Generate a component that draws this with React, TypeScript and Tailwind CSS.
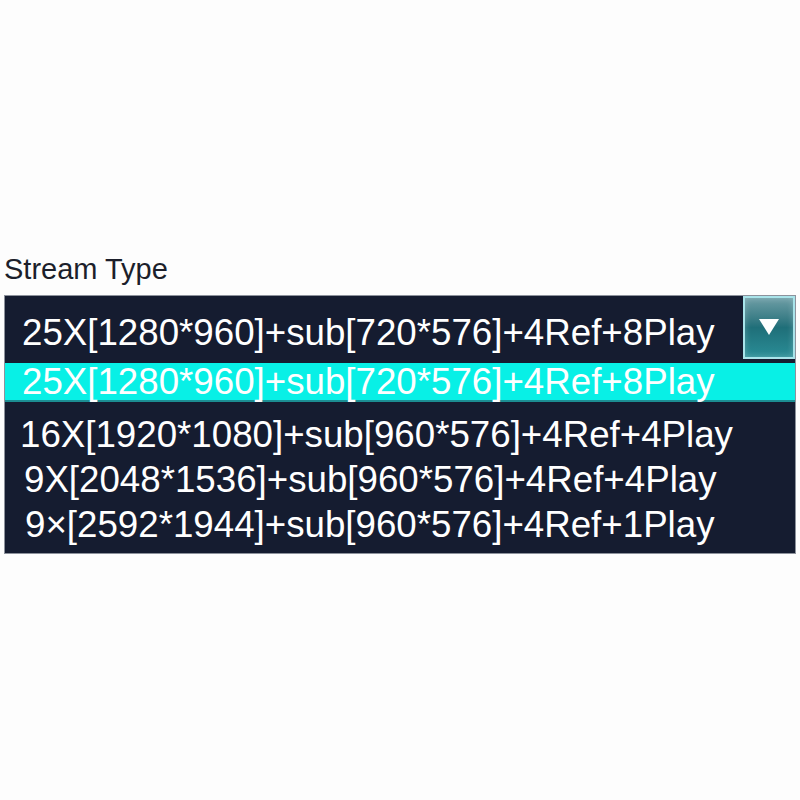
const options = [
  { label: "25X[1280*960]+sub[720*576]+4Ref+8Play", pad: "pl-[17px]", selected: true },
  { label: "16X[1920*1080]+sub[960*576]+4Ref+4Play", pad: "pl-[15px]", selected: false },
  { label: "9X[2048*1536]+sub[960*576]+4Ref+4Play", pad: "pl-[19px]", selected: false },
  { label: "9×[2592*1944]+sub[960*576]+4Ref+1Play", pad: "pl-[20px]", selected: false },
];

function ArrowButton() {
  return (
    <div className="w-[52px] h-[63px] border-2 border-[#a9e4ea] bg-gradient-to-b from-[#6d9ea6] via-[#1f6f79] to-[#2a8d96] flex items-center justify-center shadow-[inset_0_0_6px_rgba(255,255,255,0.25)]">
      <svg width="20" height="16" viewBox="0 0 20 16" className="mb-[2px]">
        <polygon points="0,0 20,0 10,16" fill="#ffffff" />
      </svg>
    </div>
  );
}

export default function App() {
  const current = options[0];

  return (
    <div
      className="min-h-[800px] w-[800px] bg-[#fdfdfd] pt-[253px]"
      style={{ fontFamily: '"Liberation Sans", Arial, sans-serif' }}
    >
      <p className="pl-[4px] text-[29px] leading-[32px] text-[#1c1f2b]">Stream Type</p>

      <div className="mt-[10px] ml-[4px] w-[792px] border border-[#8d929c] bg-[#151c30] text-white text-[36.7px]">
        {/* Current value */}
        <div className="h-[67px] flex items-start justify-between">
          <span className="pl-[17px] pt-[16px] leading-[42px] whitespace-nowrap">{current.label}</span>
          <ArrowButton />
        </div>

        {/* Highlighted option */}
        <div className="h-[37px] bg-[#08f0e6] pl-[17px] leading-[37px] whitespace-nowrap overflow-visible">
          {current.label}
        </div>
        <div className="h-[2px] bg-[#1c8e93]" />

        {/* Other options */}
        <div className="pt-[10px] pb-[6px]">
          {options.slice(1).map((o) => (
            <div key={o.label} className={`${o.pad} leading-[45px] whitespace-nowrap`}>
              {o.label}
            </div>
          ))}
        </div>
      </div>
    </div>
  );
}
